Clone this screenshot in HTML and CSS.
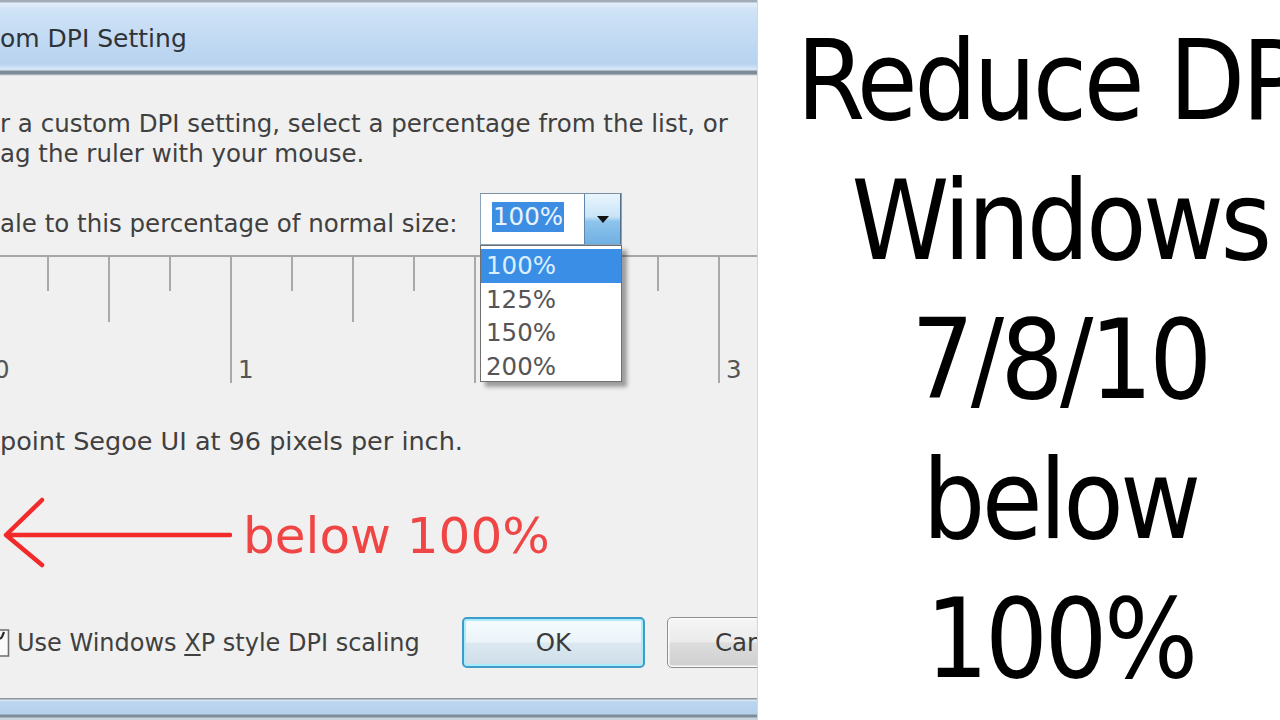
FILE: index.html
```html
<!DOCTYPE html>
<html>
<head>
<meta charset="utf-8">
<title>Reduce DPI</title>
<link rel="stylesheet" href="styles.css">
</head>
<body>
<div class="page">
  <div class="dialog">
    <div class="titlebar"><span class="title">om DPI Setting</span></div>
    <div class="content">
      <p class="intro">r a custom DPI setting, select a percentage from the list, or<br>ag the ruler with your mouse.</p>
      <div class="scale-row">
        <span class="scale-label">ale to this percentage of normal size:</span>
        <div class="combo">
          <div class="combo-field"><span class="combo-sel">100%</span></div>
          <div class="combo-btn">
            <svg width="12" height="7" viewBox="0 0 12 7"><path d="M0 0 L12 0 L6 7 Z" fill="#111"/></svg>
          </div>
          <ul class="combo-list">
            <li class="active">100%</li>
            <li>125%</li>
            <li>150%</li>
            <li>200%</li>
          </ul>
        </div>
      </div>
      <div class="ruler">
        <div class="tick long"><span class="num">0</span></div>
        <div class="tick"></div>
        <div class="tick mid"></div>
        <div class="tick"></div>
        <div class="tick long"><span class="num">1</span></div>
        <div class="tick"></div>
        <div class="tick mid"></div>
        <div class="tick"></div>
        <div class="tick long"></div>
        <div class="tick"></div>
        <div class="tick mid"></div>
        <div class="tick"></div>
        <div class="tick long"><span class="num">3</span></div>
      </div>
      <p class="info">point Segoe UI at 96 pixels per inch.</p>
      <div class="note">
        <svg class="arrow" width="232" height="72" viewBox="0 0 232 72">
          <path d="M6 38 L230 38 M42 3 L6 38 L42 68" fill="none" stroke="#f22a2a" stroke-width="4.5" stroke-linecap="round" stroke-linejoin="round"/>
        </svg>
        <span class="note-text">below 100%</span>
      </div>
      <div class="actions">
        <div class="check">
          <svg class="box" width="10" height="30" viewBox="0 0 10 30">
            <path d="M0 2 H8.5 V28 H0" fill="#fafafa" stroke="#6e6e6e" stroke-width="1.6"/>
            <path d="M0 11 L2 9 L4 4" fill="none" stroke="#2a2a2a" stroke-width="2.2"/>
          </svg>
          <span class="check-label">Use Windows <u>X</u>P style DPI scaling</span>
        </div>
        <button class="btn ok">OK</button>
        <button class="btn cancel">Car</button>
      </div>
    </div>
    <div class="frame-bottom"></div>
  </div>
  <div class="headline">
    <span class="hl-line">Reduce DPI</span>
    <span class="hl-line">Windows</span>
    <span class="hl-line">7/8/10</span>
    <span class="hl-line">below</span>
    <span class="hl-line">100%</span>
  </div>
</div>
</body>
</html>
```

FILE: styles.css
```css
html, body {
  margin: 0;
  padding: 0;
  width: 1280px;
  height: 720px;
  overflow: hidden;
  background: #ffffff;
}

body {
  font-family: "DejaVu Sans", sans-serif;
}

.page {
  display: flex;
  width: 1280px;
  height: 720px;
  overflow: hidden;
}

/* ---------- dialog ---------- */
.dialog {
  flex: 0 0 758px;
  height: 720px;
  display: flex;
  flex-direction: column;
  overflow: hidden;
  background: #f0f0f0;
  box-sizing: border-box;
  border-right: 1px solid #d6d6d6;
}

.titlebar {
  flex: 0 0 76px;
  box-sizing: border-box;
  padding-top: 24px;
  background: linear-gradient(to bottom,
    #a3adb7 0px, #a3adb7 2px,
    #e4eefa 3px, #d0e3f7 10px,
    #c3dbf3 36px, #b8d2ef 64px,
    #d6e6f6 69px, #d6e6f6 70px,
    #7e8b98 71px, #7e8b98 74px,
    #c9d0d7 75px, #eef0f2 76px);
}

.title {
  display: block;
  font-size: 25px;
  line-height: 30px;
  color: #2f3338;
  white-space: nowrap;
}

.content {
  flex: 1 1 auto;
  padding-top: 33px;
  color: #404040;
  font-size: 24.5px;
  line-height: 30px;
}

.intro {
  margin: 0;
  white-space: nowrap;
}

/* scale row */
.scale-row {
  margin-top: 24px;
  height: 52px;
  display: flex;
  align-items: center;
}

.scale-label {
  flex: 0 0 480px;
  padding-top: 9px;
  white-space: nowrap;
}

.combo {
  position: relative;
  flex: 0 0 142px;
  height: 52px;
  box-sizing: border-box;
  display: flex;
  border: 1px solid #8aa2ba;
  border-top-color: #7a8ea4;
  background: #ffffff;
  z-index: 2;
}

.combo-field {
  flex: 1 1 auto;
  padding-left: 11px;
  padding-top: 8px;
  box-sizing: border-box;
}

.combo-sel {
  display: inline-block;
  background: #3d8ee2;
  color: #e8f3ff;
  line-height: 30px;
  padding: 0 1px;
}

.combo-btn {
  flex: 0 0 37px;
  display: flex;
  align-items: center;
  justify-content: center;
  box-sizing: border-box;
  border-left: 1px solid #5f86ad;
  border-right: 1px solid #51708f;
  background: linear-gradient(to bottom, #eaf5fd 0%, #c9e4f7 45%, #8ec4ec 55%, #6fb0e2 100%);
}

.combo-list {
  position: absolute;
  left: -1px;
  top: 51px;
  width: 142px;
  height: 137px;
  margin: 0;
  padding: 3px 0 0 0;
  list-style: none;
  box-sizing: border-box;
  background: #ffffff;
  border: 1px solid #707070;
  box-shadow: 5px 5px 4px rgba(0, 0, 0, 0.35);
}

.combo-list li {
  height: 33.5px;
  line-height: 33.5px;
  padding-left: 5px;
  color: #555555;
}

.combo-list li.active {
  background: #3a8ee6;
  color: #dcefff;
}

/* ruler */
.ruler {
  margin-top: 10px;
  margin-left: -14px;
  display: flex;
  align-items: flex-start;
  border-top: 2px solid #a6a6a6;
  height: 126px;
}

.tick {
  flex: 0 0 61px;
  height: 34px;
  box-sizing: border-box;
  border-left: 2px solid #a9a9a9;
}

.tick.mid {
  height: 65px;
}

.tick.long {
  height: 126px;
  display: flex;
  align-items: flex-end;
}

.num {
  padding-left: 6px;
  padding-bottom: 1px;
  line-height: 25px;
  color: #555555;
}

.info {
  margin: 43px 0 0 0;
  font-size: 25.5px;
  white-space: nowrap;
}

/* red note */
.note {
  margin-top: 41px;
  display: flex;
  align-items: flex-start;
  height: 72px;
}

.arrow {
  flex: 0 0 232px;
}

.note-text {
  margin-left: 11px;
  margin-top: 9px;
  font-size: 50px;
  line-height: 60px;
  color: #f04545;
  white-space: nowrap;
}

/* actions */
.actions {
  margin-top: 48px;
  height: 51px;
  display: flex;
  align-items: center;
}

.check {
  flex: 0 0 462px;
  display: flex;
  align-items: center;
}

.box {
  flex: 0 0 10px;
}

.check-label {
  margin-left: 7px;
  font-size: 24px;
  white-space: nowrap;
}

.check-label u {
  text-decoration-thickness: 2px;
  text-underline-offset: 3px;
}

.btn {
  flex: 0 0 183px;
  height: 51px;
  box-sizing: border-box;
  font-family: inherit;
  font-size: 24.5px;
  line-height: 30px;
  color: #3a3a3a;
  padding: 0;
  margin: 0;
  border-radius: 5px;
}

.btn.ok {
  border: 2px solid #3f9bc8;
  box-shadow: inset 0 0 0 2px #a9ecfb;
  background: linear-gradient(to bottom, #f7fcfe 0%, #eaf4f9 48%, #dbe8f0 52%, #cddde8 100%);
  text-align: center;
}

.btn.cancel {
  margin-left: 22px;
  border: 1.5px solid #8f8f8f;
  box-shadow: inset 0 0 0 1.5px #fafafa;
  background: linear-gradient(to bottom, #f5f5f5 0%, #ebebeb 48%, #dcdcdc 52%, #cfcfcf 100%);
  text-align: left;
  padding-left: 47px;
}

.frame-bottom {
  flex: 0 0 22px;
  background: linear-gradient(to bottom,
    #8d97a1 0px, #8d97a1 1px,
    #dde8f3 2px, #bcd5ef 4px,
    #b6d0ec 16px, #7f8c99 17px,
    #7f8c99 19px, #c9d3dc 20px);
}

/* ---------- headline ---------- */
.headline {
  flex: 0 0 522px;
  min-width: 0;
  box-sizing: border-box;
  display: flex;
  flex-direction: column;
  align-items: center;
  padding-left: 82px;
  padding-top: 12px;
  font-family: "DejaVu Sans Condensed", "DejaVu Sans", sans-serif;
  font-stretch: condensed;
  font-size: 110px;
  line-height: 139.5px;
  letter-spacing: -3.5px;
  color: #000000;
}

.hl-line {
  display: block;
  white-space: nowrap;
}
```
